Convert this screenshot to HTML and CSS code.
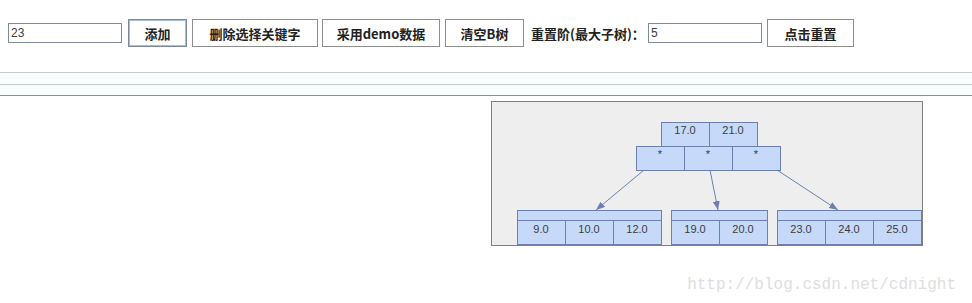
FILE: index.html
```html
<!DOCTYPE html>
<html lang="zh-CN">
<head>
  <meta charset="UTF-8">
  <meta name="viewport" content="width=device-width, initial-scale=1.0">
  <title>B树演示</title>
  <link rel="stylesheet" href="styles.css">
</head>
<body>
  <div class="Toolbar">
    <input class="Toolbar_Input" type="text" value="23">
    <button class="Toolbar_Button -focus -add" type="button">添加</button>
    <button class="Toolbar_Button -del" type="button">删除选择关键字</button>
    <button class="Toolbar_Button -demo" type="button">采用demo数据</button>
    <button class="Toolbar_Button -clear" type="button">清空B树</button>
    <span class="Toolbar_Label">重置阶(最大子树)：</span>
    <input class="Toolbar_Input -order" type="text" value="5">
    <button class="Toolbar_Button -reset" type="button">点击重置</button>
  </div>

  <div class="Rules">
    <div class="Rules_Band"></div>
    <div class="Rules_Band -last"></div>
  </div>

  <div class="Stage">
    <div class="Board">
      <svg class="Board_Tree" width="430" height="143" viewBox="0 0 430 143">
        <defs>
          <marker id="arrow" markerUnits="userSpaceOnUse" markerWidth="9" markerHeight="7" refX="9" refY="3.5" orient="auto">
            <path d="M0,0 L9,3.5 L0,7 z" class="Tree_Head"></path>
          </marker>
        </defs>

        <!-- 根节点 -->
        <rect class="Tree_Cell" x="169.5" y="20.5" width="48" height="24"></rect>
        <rect class="Tree_Cell" x="217.5" y="20.5" width="48" height="24"></rect>
        <text class="Tree_Text" x="193" y="32">17.0</text>
        <text class="Tree_Text" x="241" y="32">21.0</text>

        <rect class="Tree_Cell" x="144.5" y="44.5" width="48" height="24"></rect>
        <rect class="Tree_Cell" x="192.5" y="44.5" width="48" height="24"></rect>
        <rect class="Tree_Cell" x="240.5" y="44.5" width="48" height="24"></rect>
        <text class="Tree_Text" x="168" y="56">*</text>
        <text class="Tree_Text" x="216" y="56">*</text>
        <text class="Tree_Text" x="264" y="56">*</text>

        <!-- 连线 -->
        <line class="Tree_Link" x1="152" y1="68" x2="104" y2="108" marker-end="url(#arrow)"></line>
        <line class="Tree_Link" x1="218" y1="68" x2="226" y2="108" marker-end="url(#arrow)"></line>
        <line class="Tree_Link" x1="285" y1="68" x2="346" y2="108" marker-end="url(#arrow)"></line>

        <!-- 叶子节点 1 -->
        <rect class="Tree_Cell" x="25.5" y="108.5" width="144" height="10"></rect>
        <rect class="Tree_Cell" x="25.5" y="118.5" width="48" height="24"></rect>
        <rect class="Tree_Cell" x="73.5" y="118.5" width="48" height="24"></rect>
        <rect class="Tree_Cell" x="121.5" y="118.5" width="48" height="24"></rect>
        <text class="Tree_Text" x="49" y="131">9.0</text>
        <text class="Tree_Text" x="97" y="131">10.0</text>
        <text class="Tree_Text" x="145" y="131">12.0</text>

        <!-- 叶子节点 2 -->
        <rect class="Tree_Cell" x="179.5" y="108.5" width="96" height="10"></rect>
        <rect class="Tree_Cell" x="179.5" y="118.5" width="48" height="24"></rect>
        <rect class="Tree_Cell" x="227.5" y="118.5" width="48" height="24"></rect>
        <text class="Tree_Text" x="203" y="131">19.0</text>
        <text class="Tree_Text" x="251" y="131">20.0</text>

        <!-- 叶子节点 3 -->
        <rect class="Tree_Cell" x="285.5" y="108.5" width="144" height="10"></rect>
        <rect class="Tree_Cell" x="285.5" y="118.5" width="48" height="24"></rect>
        <rect class="Tree_Cell" x="333.5" y="118.5" width="48" height="24"></rect>
        <rect class="Tree_Cell" x="381.5" y="118.5" width="48" height="24"></rect>
        <text class="Tree_Text" x="309" y="131">23.0</text>
        <text class="Tree_Text" x="357" y="131">24.0</text>
        <text class="Tree_Text" x="405" y="131">25.0</text>
      </svg>
    </div>
  </div>

  <div class="Watermark">http://blog.csdn.net/cdnight</div>
</body>
</html>
```

FILE: styles.css
```css
html,
body {
  margin: 0;
  padding: 0;
  background: #fff;
}
body {
  font-family: "Liberation Sans", "Noto Sans CJK SC", sans-serif;
  font-size: 12px;
  color: #333;
}

/* 上部の操作バー */
.Toolbar {
  display: flex;
  align-items: center;
  height: 28px;
  padding: 19px 0 0 8px;
}
.Toolbar_Input {
  box-sizing: border-box;
  width: 114px;
  height: 20px;
  margin: 0;
  padding: 0 2px;
  border: 1px solid #7f8b97;
  background: #fff;
  font-family: "Liberation Sans", sans-serif;
  font-size: 12px;
  color: #404040;
  outline: none;
}
.Toolbar_Button {
  box-sizing: border-box;
  height: 28px;
  margin: 0 0 0 5px;
  padding: 0;
  border: 1px solid #8e8e8e;
  background: #fff;
  font-family: "Noto Sans CJK SC", sans-serif;
  font-weight: bold;
  font-size: 13px;
  color: #222;
}
.Toolbar_Button.-focus {
  border-color: #7b8a99;
  box-shadow: inset 0 0 0 1px #a9bed5;
}
.Toolbar_Button.-add { width: 59px; margin-left: 6px; }
.Toolbar_Button.-del { width: 126px; }
.Toolbar_Button.-demo { width: 118px; margin-left: 4px; }
.Toolbar_Button.-clear { width: 79px; }
.Toolbar_Button.-reset { width: 87px; }
.Toolbar_Label {
  margin-left: 7px;
  width: 110px;
  font-family: "Noto Sans CJK SC", sans-serif;
  font-weight: bold;
  font-size: 13px;
  color: #222;
  white-space: nowrap;
}
.Toolbar_Input.-order {
  margin-left: 7px;
}

/* 区切り線 */
.Rules {
  margin-top: 25px;
}
.Rules_Band {
  height: 11px;
  border-top: 1px solid #c3cbcb;
  background: #f9fdfd;
}
.Rules_Band.-last {
  height: 10px;
  border-bottom: 1px solid #8b9090;
}

/* B树の描画領域 */
.Stage {
  padding: 5px 0 0 491px;
}
.Board {
  box-sizing: border-box;
  width: 432px;
  height: 145px;
  border: 1px solid #808080;
  background: #eeeeee;
}
.Board_Tree {
  display: block;
}
.Tree_Cell {
  fill: #c6d9f8;
  stroke: #6b80b0;
  stroke-width: 1;
}
.Tree_Text {
  font-family: "Liberation Sans", sans-serif;
  font-size: 11px;
  fill: #3c3c3c;
  text-anchor: middle;
}
.Tree_Link {
  stroke: #6b80b0;
  stroke-width: 1;
}
.Tree_Head {
  fill: #6b80b0;
}

.Watermark {
  margin-top: 30px;
  padding-right: 16px;
  text-align: right;
  font-family: "Liberation Mono", monospace;
  font-size: 16px;
  line-height: 18px;
  color: #dedede;
}
```
